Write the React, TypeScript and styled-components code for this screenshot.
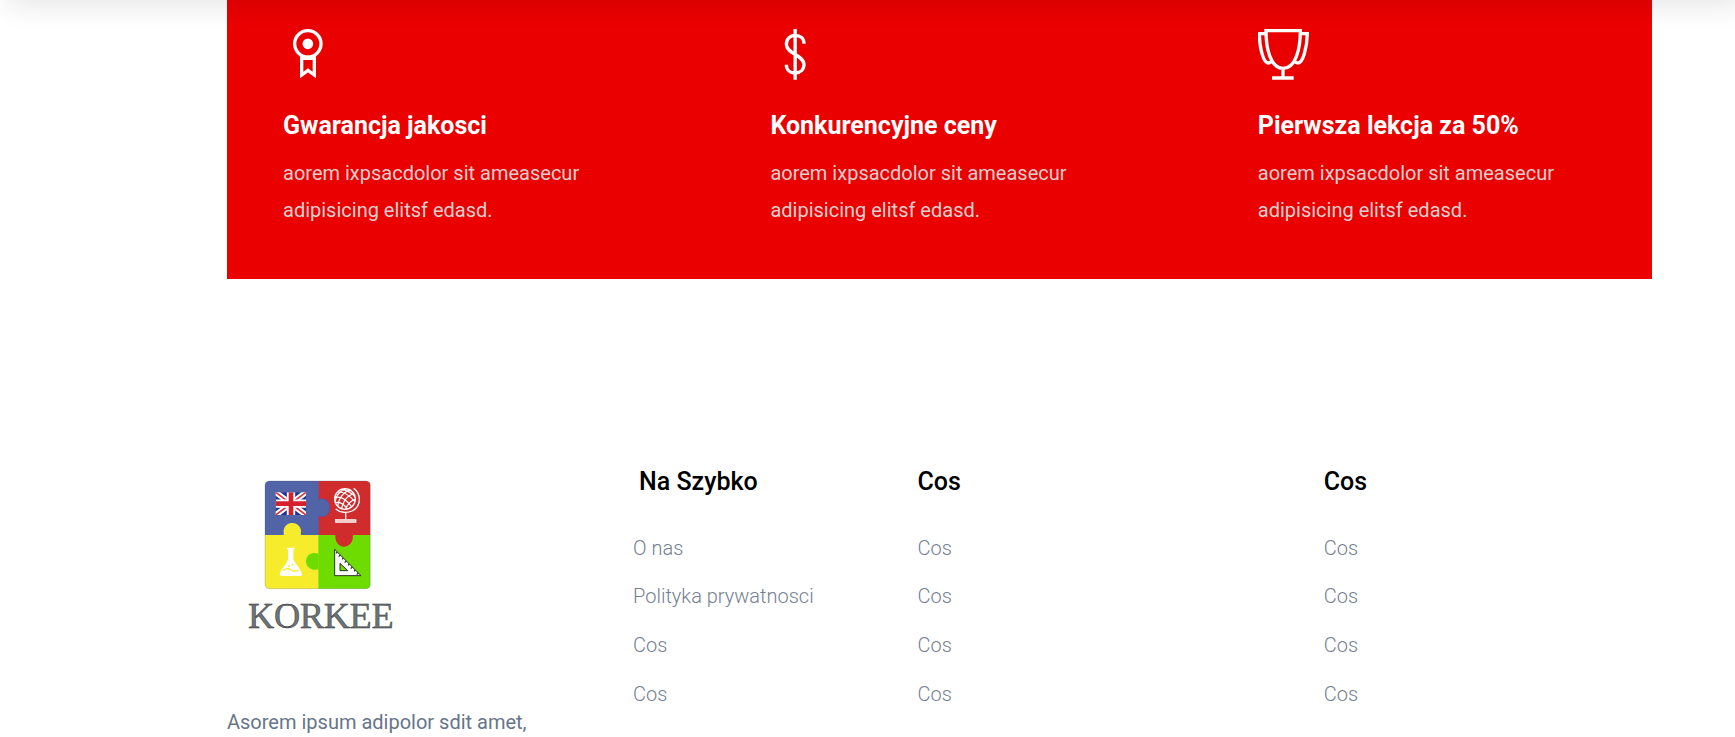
import React from "react";
import styled, { createGlobalStyle } from "styled-components";

const GlobalStyle = createGlobalStyle`
  * { box-sizing: border-box; }
  body {
    margin: 0;
    background: #fff;
    font-family: Roboto, "Liberation Sans", sans-serif;
    overflow: hidden;
  }
  h3, h4, p, ul { margin: 0; padding: 0; }
`;

const Page = styled.div`
  position: relative;
  height: 737px;
  overflow: hidden;
`;

const StickyHeader = styled.header`
  position: absolute;
  top: -80px;
  left: 0;
  width: 100%;
  height: 80px;
  z-index: 2;
  box-shadow: 8px 6px 25px rgba(25, 25, 25, 0.105);
`;

const Container = styled.div`
  width: 1425px;
  margin-left: 227px;
`;

const Features = styled.section`
  display: grid;
  grid-template-columns: 487.4px 487.4px 1fr;
  height: 279px;
  padding: 29px 0 0 56px;
  background: #eb0000;
`;

const FeatureIcon = styled.svg`
  display: block;
  width: 51px;
  height: 51px;
  fill: none;
  stroke: #fff;
  stroke-width: 10;
`;

const FeatureTitle = styled.h3`
  margin-top: 31px;
  font-size: 25px;
  line-height: 30px;
  font-weight: 700;
  color: #fff;
`;

const FeatureText = styled.p`
  width: 320px;
  margin-top: 14px;
  font-size: 20px;
  line-height: 37px;
  color: #e0cfcf;
`;

const Footer = styled.footer`
  display: grid;
  grid-template-columns: 406px 284.5px 406.3px 1fr;
  margin-top: 181px;
`;

const Logo = styled.svg`
  display: block;
  width: 200px;
  height: 190px;
  margin-left: -7px;
`;

const About = styled.p`
  width: 330px;
  margin-top: 54px;
  font-size: 20px;
  line-height: 36px;
  color: #66758a;
`;

const ColumnTitle = styled.h4<{ $indent?: number }>`
  margin-top: 7px;
  padding-left: ${(p) => p.$indent ?? 0}px;
  font-size: 25px;
  line-height: 30px;
  font-weight: 500;
  color: #000;
`;

const Links = styled.ul`
  display: grid;
  gap: 19px;
  margin-top: 35.6px;
  list-style: none;
`;

const LinkItem = styled.li`
  height: 29.7px;
  font-size: 20px;
  line-height: 30px;
  font-weight: 300;
  color: #748091;
`;

const MedalIcon = () => (
  <FeatureIcon viewBox="0 0 153 153">
    <circle cx="74.500" cy="44.500" r="39.500" />
    <circle cx="74.500" cy="44.500" r="16" fill="#fff" stroke="none" />
    <path d="M56 88H94M56 80V138L75 124L94 138V80" />
  </FeatureIcon>
);

const DollarIcon = () => (
  <FeatureIcon viewBox="0 0 153 153">
    <path d="M75.500 0V152M102 44C102 28 91 19 75.500 19S49 30 49 46C49 75 102 78 102 106C102 122 91 132 75.500 132S49 122 49 107" />
  </FeatureIcon>
);

const TrophyIcon = () => (
  <FeatureIcon viewBox="2 0 153 153">
    <path d="M26 5H129C129 60 115 118 77.500 118S26 60 26 5ZM77 118V146M44 147H109" />
    <path d="M26 14H6C6 55 18 102 33 102Q39 102 43 97M129 14H150C149 55 137 102 122 102Q116 102 112 97" />
  </FeatureIcon>
);

const KorkeeLogo = () => (
  <Logo viewBox="0 0 600 570">
    <defs>
      <clipPath id="tile">
        <rect x="135" y="63" width="316" height="323" rx="13" />
      </clipPath>
      <clipPath id="flag">
        <rect x="167" y="97" width="91" height="68" />
      </clipPath>
      <clipPath id="globe">
        <circle cx="375" cy="117" r="31" />
      </clipPath>
    </defs>
    <rect x="35" y="402" width="510" height="130" fill="#fffffd" />
    <g clipPath="url(#tile)">
      <rect x="135" y="63" width="161" height="162" fill="#5264a8" />
      <rect x="295" y="63" width="157" height="162" fill="#d12c2d" />
      <rect x="135" y="225" width="161" height="162" fill="#f7ec2c" />
      <rect x="295" y="225" width="157" height="162" fill="#6edc00" />
      <path d="M294 119C300 118 304 116 310 117C323 119 329 131 329 144S321 169 309 169C304 169 300 167 294 168Z" fill="#5264a8" />
      <path d="M295 63V118C300 118 304 116 310 117C323 119 329 131 329 144S321 169 309 169C304 169 300 167 295 168V225" fill="none" stroke="#3a5cc0" strokeWidth="2" />
      <path d="M191 226C192 220 190 216 191 211C193 197 204 189 217 189S242 199 243 212C243 217 242 220 243 226Z" fill="#f7ec2c" />
      <path d="M346 224C347 229 345 232 347 238C350 252 360 260 372 260S395 251 398 238C399 232 398 229 399 224Z" fill="#d12c2d" />
      <path d="M296 280C289 281 286 278 280 279C266 281 258 292 258 304S266 326 279 329C286 330 289 328 296 329Z" fill="#6edc00" />
    </g>
    <rect x="135" y="63" width="316" height="323" rx="13" fill="none" stroke="#44505f" strokeOpacity=".35" strokeWidth="2" />
    <g clipPath="url(#flag)">
      <rect x="167" y="97" width="91" height="68" fill="#20358f" />
      <path d="M163 94L262 168M262 94L163 168" stroke="#fff" strokeWidth="17" />
      <path d="M163 94L262 168M262 94L163 168" stroke="#d93040" strokeWidth="5" />
      <path d="M213 97V165M167 131H258" stroke="#fff" strokeWidth="25" />
      <path d="M213 97V165M167 131H258" stroke="#d6202e" strokeWidth="14" />
    </g>
    <g fill="none" stroke="#fff" strokeWidth="4">
      <circle cx="375" cy="117" r="31" />
      <g clipPath="url(#globe)" strokeWidth="3.500">
        <path d="M340 100Q370 85 405 125M338 115Q370 100 398 145M340 130Q365 118 385 152M355 85Q390 90 410 115" />
        <path d="M400 88Q355 95 352 150M385 84Q345 95 345 135M408 100Q372 105 364 150M410 118Q385 122 376 150" />
      </g>
      <path d="M401 85C425 103 424 140 396 153C380 160 360 158 347 147M377 158V178" />
      <path d="M347 186V180H407V186Z" />
    </g>
    <path d="M201 263H224V268H220V297C224 311 246 330 246 344Q245 348 239 348H186Q179 348 179 343C180 330 201 313 204 297V268H201Z" fill="#fff" />
    <path d="M189 331Q202 322 213 330T236 329" fill="none" stroke="#f7ec2c" strokeWidth="4" />
    <circle cx="207" cy="319" r="3" fill="#f7ec2c" />
    <circle cx="217" cy="314" r="2.500" fill="#f7ec2c" />
    <path d="M344 268L423 347H344ZM360 310V332H383Z" fill="#fff" fillRule="evenodd" stroke="#26331f" strokeWidth="3" />
    <path d="M352 276l-4 4M361 285l-5 5M370 294l-4 4M379 303l-5 5M388 312l-4 4M397 321l-5 5M406 330l-4 4M415 339l-5 5" stroke="#26331f" strokeWidth="3.500" />
    <text
      x="84"
      y="503"
      fontFamily="Liberation Serif, serif"
      fontSize="109"
      textLength="437"
      lengthAdjust="spacing"
      fill="#6d7476"
      stroke="#1c2022"
      strokeWidth="1.200"
    >
      KORKEE
    </text>
  </Logo>
);

const features = [
  { icon: <MedalIcon />, title: "Gwarancja jakosci" },
  { icon: <DollarIcon />, title: "Konkurencyjne ceny" },
  { icon: <TrophyIcon />, title: "Pierwsza lekcja za 50%" },
];

const columns = [
  { title: "Na Szybko", indent: 6, links: ["O nas", "Polityka prywatnosci", "Cos", "Cos"] },
  { title: "Cos", links: ["Cos", "Cos", "Cos", "Cos"] },
  { title: "Cos", links: ["Cos", "Cos", "Cos", "Cos"] },
];

export default function App() {
  return (
    <Page>
      <GlobalStyle />
      <StickyHeader />
      <Container>
        <Features>
          {features.map((f) => (
            <div key={f.title}>
              {f.icon}
              <FeatureTitle>{f.title}</FeatureTitle>
              <FeatureText>aorem ixpsacdolor sit ameasecur adipisicing elitsf edasd.</FeatureText>
            </div>
          ))}
        </Features>
        <Footer>
          <div>
            <KorkeeLogo />
            <About>Asorem ipsum adipolor sdit amet,</About>
          </div>
          {columns.map((c, i) => (
            <div key={i}>
              <ColumnTitle $indent={c.indent}>{c.title}</ColumnTitle>
              <Links>
                {c.links.map((l, j) => (
                  <LinkItem key={j}>{l}</LinkItem>
                ))}
              </Links>
            </div>
          ))}
        </Footer>
      </Container>
    </Page>
  );
}
